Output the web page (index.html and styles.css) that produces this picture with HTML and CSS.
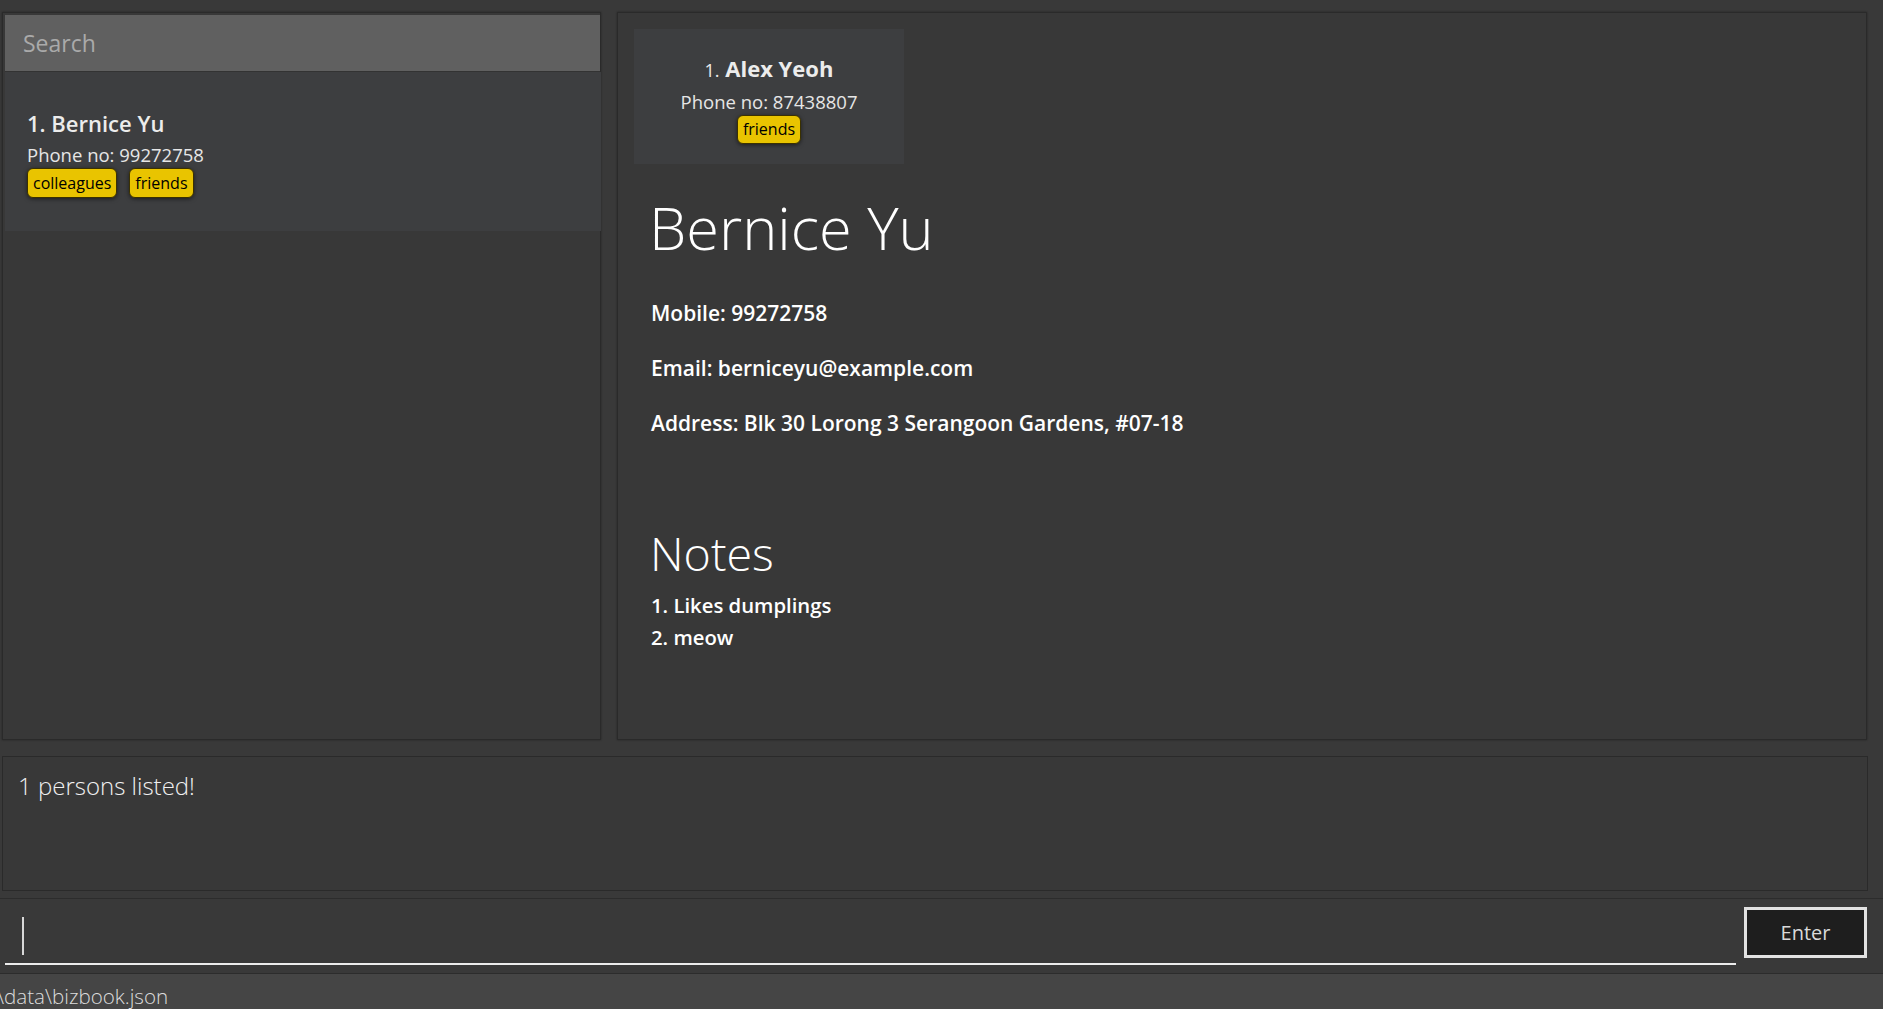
FILE: index.html
```html
<!DOCTYPE html>
<html lang="en">
<head>
<meta charset="utf-8">
<title>BizBook</title>
<link rel="stylesheet" href="styles.css">
</head>
<body>
  <div class="main">
    <section class="list-panel">
      <div class="search">Search</div>
      <div class="person-card">
        <div class="card-name">1. Bernice Yu</div>
        <div class="card-phone">Phone no: 99272758</div>
        <div class="tags">
          <span class="tag">colleagues</span>
          <span class="tag">friends</span>
        </div>
      </div>
    </section>
    <section class="detail-panel">
      <div class="pinned-card">
        <div class="card-name"><span class="card-index">1.</span> Alex Yeoh</div>
        <div class="card-phone">Phone no: 87438807</div>
        <div class="tags tags-center">
          <span class="tag">friends</span>
        </div>
      </div>
      <div class="detail">
        <h1 class="detail-name">Bernice Yu</h1>
        <p class="detail-field first">Mobile: 99272758</p>
        <p class="detail-field">Email: berniceyu@example.com</p>
        <p class="detail-field">Address: Blk 30 Lorong 3 Serangoon Gardens, #07-18</p>
        <h2 class="notes-title">Notes</h2>
        <p class="note">1. Likes dumplings</p>
        <p class="note">2. meow</p>
      </div>
    </section>
  </div>
  <div class="result">1 persons listed!</div>
  <div class="command">
    <div class="command-input"><span class="caret"></span></div>
    <div class="enter-btn">Enter</div>
  </div>
  <div class="status">\data\bizbook.json</div>
</body>
</html>
```
FILE: styles.css
```css
* { box-sizing: border-box; }

html, body {
  margin: 0;
  padding: 0;
}

body {
  width: 1883px;
  height: 1009px;
  overflow: hidden;
  background: #393939;
  font-family: "Open Sans", "Noto Sans", sans-serif;
  color: #ececec;
  display: flex;
  flex-direction: column;
}

.main {
  display: flex;
  gap: 16px;
  padding: 12px 16px 0 2px;
  height: 740px;
  flex: none;
}

.list-panel {
  width: 599px;
  height: 728px;
  border: 1px solid #2a2a2a;
  background: #383838;
  padding: 2px 0 0 2px;
  box-shadow: 0 0 2px rgba(0,0,0,0.35);
}

.search {
  width: 595px;
  height: 57px;
  background: #606060;
  border-bottom: 1px solid #333;
  color: #aaaaaa;
  font-size: 23px;
  line-height: 56px;
  padding-left: 18px;
}

.person-card {
  width: 596px;
  height: 159px;
  background: #3d3e40;
  padding: 38px 0 0 22px;
}

.card-name {
  font-weight: 600;
  font-size: 22px;
  line-height: 26px;
  color: #ececec;
}

.card-index {
  font-weight: 400;
  font-size: 18px;
}

.card-phone {
  margin-top: 7px;
  font-size: 18.5px;
  line-height: 24px;
  color: #e6e6e6;
}

.tags {
  display: flex;
  gap: 12px;
  margin-top: 1px;
}

.tags-center { justify-content: center; }

.tag {
  background: #e9c400;
  color: #000;
  border: 1px solid #3b3100;
  border-radius: 6px;
  font-size: 16px;
  line-height: 28px;
  height: 30px;
  padding: 0 5px;
  box-shadow: 0 1px 4px rgba(0,0,0,0.55);
}

.detail-panel {
  flex: 1;
  height: 728px;
  border: 1px solid #2a2a2a;
  background: #383838;
  padding: 16px 0 0 16px;
  box-shadow: 0 0 2px rgba(0,0,0,0.35);
}

.pinned-card {
  width: 270px;
  height: 135px;
  background: #3d3e40;
  padding-top: 26px;
  text-align: center;
}

.pinned-card .card-name { font-weight: 700; }

.pinned-card .tag {
  height: 29px;
  line-height: 27px;
}

.detail {
  padding-left: 17px;
  color: #fff;
}

.detail-name {
  margin: 28px 0 0 -2px;
  font-weight: 300;
  font-size: 59.5px;
  line-height: 70px;
}

.detail-field {
  margin: 27px 0 0;
  font-weight: 600;
  font-size: 21px;
  line-height: 28px;
}

.detail-field.first { margin-top: 37px; }

.notes-title {
  margin: 88px 0 0 -1px;
  font-weight: 300;
  font-size: 46.6px;
  line-height: 56px;
}

.note {
  margin: 0;
  font-weight: 600;
  font-size: 20.3px;
  line-height: 32px;
}

.notes-title + .note { margin-top: 8px; }

.result {
  margin: 16px 15px 0 2px;
  height: 135px;
  border: 1px solid #2a2a2a;
  background: #383838;
  padding: 13px 0 0 15px;
  font-weight: 300;
  font-size: 24px;
  line-height: 32px;
  color: #f0f0f0;
  flex: none;
}

.command {
  margin-top: 7px;
  height: 76px;
  flex: none;
  border-top: 1px solid #2c2c2c;
  border-bottom: 1px solid #2c2c2c;
  background: #393939;
  display: flex;
  align-items: flex-start;
  gap: 8px;
  padding: 0 16px 0 5px;
}

.command-input {
  flex: 1;
  height: 66px;
  border-bottom: 2px solid #ececec;
  padding: 18px 0 0 17px;
}

.caret {
  display: block;
  width: 2px;
  height: 38px;
  background: #d8d8d8;
}

.enter-btn {
  margin-top: 8px;
  width: 123px;
  height: 51px;
  border: 3px solid #e2e2e2;
  background: #1e1e1e;
  color: #dadada;
  font-weight: 400;
  font-size: 20px;
  line-height: 45px;
  text-align: center;
}

.status {
  flex: 1;
  background: #454545;
  padding: 9px 0 0 0;
  text-indent: -3px;
  font-weight: 300;
  font-size: 20.6px;
  line-height: 27px;
  color: #dcdcdc;
  white-space: nowrap;
}
```
